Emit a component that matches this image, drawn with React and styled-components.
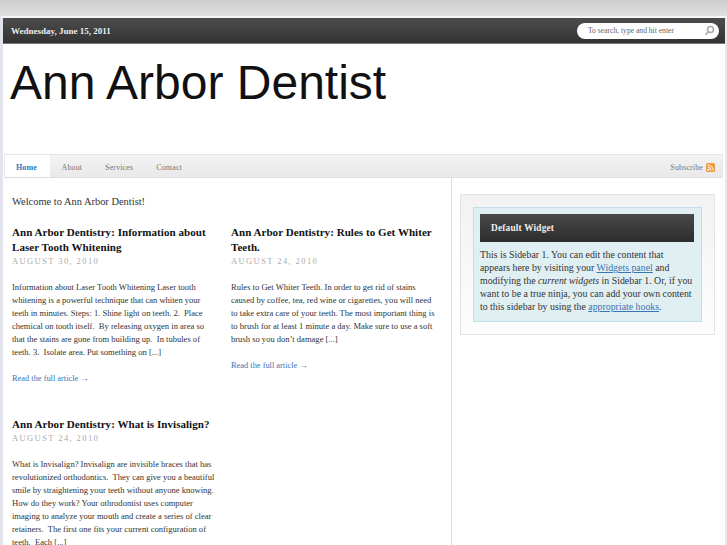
import styled, { createGlobalStyle } from "styled-components";

const GlobalStyle = createGlobalStyle`
  html, body {
    margin: 0;
    padding: 0;
    height: 545px;
    overflow: hidden;
    background: #fff;
    font-family: "Liberation Serif", serif;
  }
`;

const Page = styled.div`
  width: 727px;
  height: 545px;
  overflow: hidden;
  background: linear-gradient(#cdcdcd, #e0e0e0 16px, #fff 16px);
`;

const Wrapper = styled.div`
  margin-top: 16px;
  width: 727px;
  height: 529px;
  box-sizing: border-box;
  background: #fff;
  border-left: 3px solid #e3e3ee;
  border-right: 2px solid #e8e8ee;
  border-top: 2px solid #f6f6f6;
`;

const TopBar = styled.div`
  height: 26px;
  box-sizing: border-box;
  background: linear-gradient(#4c4c4c, #333);
  border-bottom: 1px solid #777;
  display: flex;
  align-items: center;
  justify-content: space-between;
  padding: 0 6px 0 8px;
`;

const DateText = styled.span`
  color: #eee;
  font-size: 9px;
  font-weight: bold;
`;

const Search = styled.div`
  width: 142px;
  height: 16px;
  margin-top: 1px;
  box-sizing: border-box;
  background: #fff;
  border-radius: 8px;
  display: flex;
  align-items: center;
  justify-content: space-between;
  padding: 0 4px 2px 11px;
  color: #666;
  font-size: 7.6px;
`;

const Logo = styled.div`
  height: 110px;
  box-sizing: border-box;
  padding: 8px 0 0 7px;
  font-family: "Liberation Sans", sans-serif;
  font-size: 48px;
  line-height: 62px;
  color: #111;
`;

const NavBar = styled.div`
  height: 24px;
  box-sizing: border-box;
  margin: 0 2px 0 1px;
  background: linear-gradient(#f3f3f3, #e9e9e9);
  border: 1px solid #e6e6e6;
  border-bottom: 1px solid #ddd;
  display: flex;
  align-items: stretch;
  font-size: 8px;
  letter-spacing: 0.12px;
  color: #777;
`;

const NavItem = styled.div`
  display: flex;
  align-items: center;
  padding: ${(p) => (p.$active ? "2px 0 0 11px" : "2px 11.5px 0")};
  width: ${(p) => (p.$active ? "45px" : "auto")};
  box-sizing: border-box;
  background: ${(p) => (p.$active ? "#fff" : "transparent")};
  color: ${(p) => (p.$active ? "#2f74c0" : "#777")};
  font-weight: ${(p) => (p.$active ? "bold" : "normal")};
`;

const Subscribe = styled.div`
  margin-left: auto;
  display: flex;
  align-items: center;
  gap: 3px;
  padding: 2px 7px 0 0;
`;

const Body = styled.div`
  display: flex;
  height: 380px;
`;

const Main = styled.div`
  width: 449px;
  box-sizing: border-box;
  border-right: 1px solid #ddd;
  padding: 16px 0 0 9px;
`;

const Welcome = styled.p`
  margin: 0 0 16px;
  font-size: 10.45px;
  line-height: 15px;
  color: #333;
`;

const PostGrid = styled.div`
  display: grid;
  grid-template-columns: 203px 206px;
  column-gap: 16px;
  row-gap: 32px;
  align-items: start;
`;

const Post = styled.article``;

const PostTitle = styled.h2`
  margin: 0;
  font-size: 11px;
  line-height: 15px;
  font-weight: bold;
  letter-spacing: 0.05px;
  color: #111;
`;

const PostDate = styled.div`
  font-size: 8.5px;
  line-height: 12px;
  letter-spacing: 1.4px;
  color: #aaa;
  margin-bottom: 14px;
`;

const Excerpt = styled.p`
  margin: 0 0 13px;
  font-size: 8.55px;
  line-height: 13px;
  color: #333;
`;

const ReadMore = styled.a`
  display: block;
  font-size: 8.4px;
  line-height: 13px;
  color: #3a74b4;
`;

const Sidebar = styled.aside`
  flex: 1;
  padding: 16px 0 0 8px;
`;

const WidgetFrame = styled.div`
  width: 255px;
  box-sizing: border-box;
  border: 1px solid #e4e4e4;
  padding: 12px;
  background: linear-gradient(#f2f2f2, #fdfdfd);
`;

const Widget = styled.div`
  background: #e0eff2;
  border: 1px solid #bfe0ea;
  padding: 6px 7px 8px 6px;
`;

const WidgetTitle = styled.h4`
  margin: 0 0 6px;
  height: 28px;
  padding-left: 11px;
  background: linear-gradient(#4a4a4a, #2c2c2c);
  display: flex;
  align-items: center;
  color: #eee;
  font-size: 9.3px;
  font-weight: bold;
  letter-spacing: 0.2px;
`;

const WidgetText = styled.p`
  margin: 0;
  font-size: 9.85px;
  line-height: 13px;
  color: #333;
`;

const WidgetLink = styled.a`
  color: #3a74b4;
  text-decoration: underline;
`;

const posts = [
  {
    title: "Ann Arbor Dentistry: Information about Laser Tooth Whitening",
    date: "AUGUST 30, 2010",
    text: "Information about Laser Tooth Whitening Laser tooth whitening is a powerful technique that can whiten your teeth in minutes. Steps: 1. Shine light on teeth. 2.\u00a0 Place chemical on tooth itself.\u00a0 By releasing oxygen in area so that the stains are gone from building up.\u00a0 In tubules of teeth. 3.\u00a0 Isolate area. Put something on [...]",
    more: true,
  },
  {
    title: "Ann Arbor Dentistry: Rules to Get Whiter Teeth.",
    date: "AUGUST 24, 2010",
    text: "Rules to Get Whiter Teeth. In order to get rid of stains caused by coffee, tea, red wine or cigarettes, you will need to take extra care of your teeth. The most important thing is to brush for at least 1 minute a day. Make sure to use a soft brush so you don’t damage [...]",
    more: true,
  },
  {
    title: "Ann Arbor Dentistry: What is Invisalign?",
    date: "AUGUST 24, 2010",
    text: "What is Invisalign? Invisalign are invisible braces that has revolutionized orthodontics.\u00a0 They can give you a beautiful smile by straightening your teeth without anyone knowing. How do they work? Your othrodontist uses computer imaging to analyze your mouth and create a series of clear retainers.\u00a0 The first one fits your current configuration of teeth.\u00a0 Each [...]",
  },
];

const SearchIcon = () => (
  <svg width="11" height="11" viewBox="0 0 11 11" fill="none" stroke="#aaa" strokeWidth="1.6">
    <circle cx="6.5" cy="4.5" r="3" />
    <path d="M4.3 6.8 1.5 9.8" />
  </svg>
);

const RssIcon = () => (
  <svg width="9" height="9" viewBox="0 0 9 9">
    <rect width="9" height="9" rx="1.5" fill="#f09a3a" />
    <circle cx="2.3" cy="6.7" r="1" fill="#fff" />
    <path d="M1.5 4a3.5 3.5 0 0 1 3.5 3.5M1.5 1.8a5.7 5.7 0 0 1 5.7 5.7" fill="none" stroke="#fff" strokeWidth="1" />
  </svg>
);

export default function App() {
  return (
    <Page>
      <GlobalStyle />
      <Wrapper>
        <TopBar>
          <DateText>Wednesday, June 15, 2011</DateText>
          <Search>
            To search, type and hit enter
            <SearchIcon />
          </Search>
        </TopBar>
        <Logo>Ann Arbor Dentist</Logo>
        <NavBar>
          <NavItem $active>Home</NavItem>
          <NavItem>About</NavItem>
          <NavItem>Services</NavItem>
          <NavItem>Contact</NavItem>
          <Subscribe>
            Subscribe <RssIcon />
          </Subscribe>
        </NavBar>
        <Body>
          <Main>
            <Welcome>Welcome to Ann Arbor Dentist!</Welcome>
            <PostGrid>
              {posts.map((post) => (
                <Post key={post.title}>
                  <PostTitle>{post.title}</PostTitle>
                  <PostDate>{post.date}</PostDate>
                  <Excerpt>{post.text}</Excerpt>
                  {post.more && <ReadMore>Read the full article →</ReadMore>}
                </Post>
              ))}
            </PostGrid>
          </Main>
          <Sidebar>
            <WidgetFrame>
              <Widget>
                <WidgetTitle>Default Widget</WidgetTitle>
                <WidgetText>
                  This is Sidebar 1. You can edit the content that appears here by visiting your{" "}
                  <WidgetLink>Widgets panel</WidgetLink> and modifying the <em>current widgets</em> in
                  Sidebar 1. Or, if you want to be a true ninja, you can add your own content to this
                  sidebar by using the <WidgetLink>appropriate hooks</WidgetLink>.
                </WidgetText>
              </Widget>
            </WidgetFrame>
          </Sidebar>
        </Body>
      </Wrapper>
    </Page>
  );
}
